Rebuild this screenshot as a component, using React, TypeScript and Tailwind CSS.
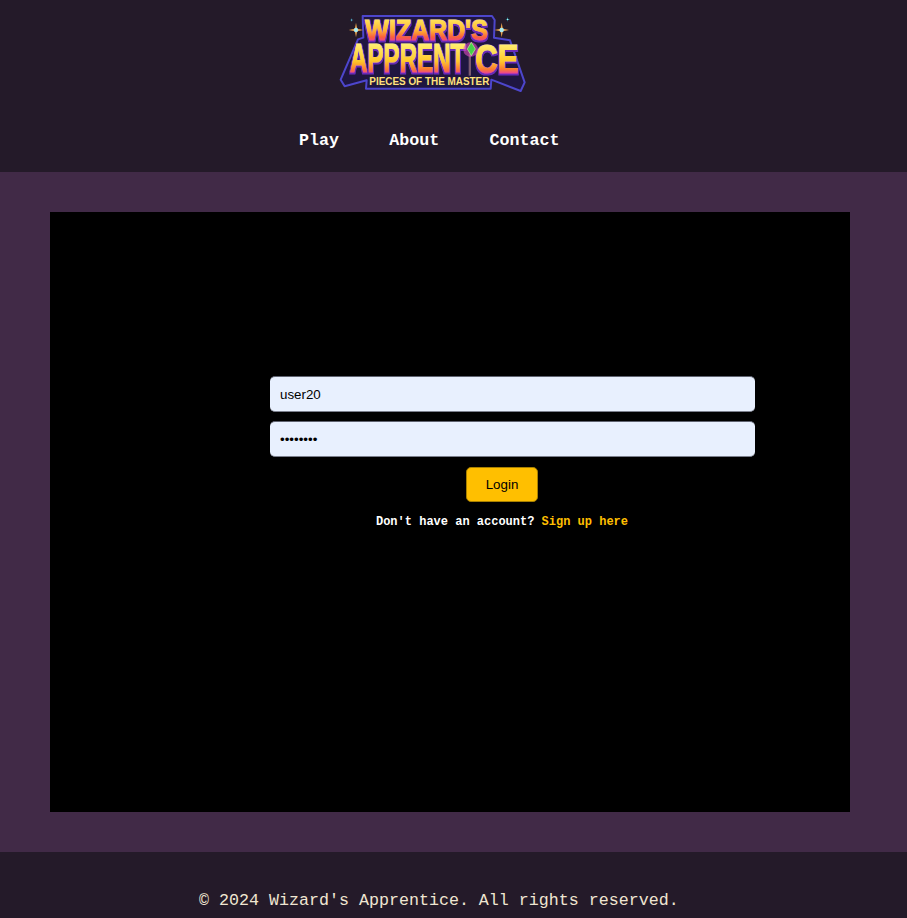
const mono = "font-['Liberation_Mono','DejaVu_Sans_Mono',monospace]";
const field =
  "h-[36px] w-[485px] self-start rounded-[5px] border-b border-t border-b-[#7b7f8c] border-t-[#5f6370] bg-[#e8f0fe] px-[10px] font-['Liberation_Sans',Arial,sans-serif] text-[13.33px] text-black outline-none";

function Sparkle({ x, y, r, color, core }: { x: number; y: number; r: number; color: string; core: string }) {
  const q = r * 0.16;
  return (
    <g>
      <path d={`M${x} ${y - r}L${x + q} ${y - q}L${x + r} ${y}L${x + q} ${y + q}L${x} ${y + r}L${x - q} ${y + q}L${x - r} ${y}L${x - q} ${y - q}Z`} fill={color} />
      <circle cx={x} cy={y} r={r * 0.3} fill={core} />
    </g>
  );
}

function Logo() {
  const sans = "'Liberation Sans', Arial, sans-serif";
  return (
    <svg viewBox="0 0 630 285" className="block h-[95px] w-[210px]" aria-label="Wizard's Apprentice logo">
      <defs>
        <linearGradient id="row1" gradientUnits="userSpaceOnUse" x1="0" y1="42" x2="0" y2="110">
          <stop offset="0" stopColor="#ffe65c" />
          <stop offset="0.5" stopColor="#ffb52e" />
          <stop offset="0.8" stopColor="#f9603a" />
          <stop offset="1" stopColor="#e8409a" />
        </linearGradient>
        <linearGradient id="row2" gradientUnits="userSpaceOnUse" x1="0" y1="112" x2="0" y2="206">
          <stop offset="0" stopColor="#fff27a" />
          <stop offset="0.6" stopColor="#ffc92a" />
          <stop offset="0.86" stopColor="#fb7a30" />
          <stop offset="1" stopColor="#e8409a" />
        </linearGradient>
        <filter id="lift" x="-10%" y="-20%" width="120%" height="150%">
          <feMorphology in="SourceAlpha" operator="dilate" radius="1.5" result="fat" />
          <feOffset in="fat" dy="4" result="low" />
          <feFlood floodColor="#6a2cb8" />
          <feComposite in2="low" operator="in" result="shade" />
          <feMerge>
            <feMergeNode in="shade" />
            <feMergeNode in="SourceGraphic" />
          </feMerge>
        </filter>
      </defs>
      <path
        d="M98 33L486 33L494 45L492 98L540 106L584 232L572 258L484 224L482 251L108 251L110 226L44 244L32 224L84 103L100 98Z"
        fill="#1f1640"
        stroke="#4d46cc"
        strokeWidth="6"
        strokeLinejoin="round"
      />
      <g filter="url(#lift)">
        <text x="106" y="104" fontFamily={sans} fontWeight="700" fontSize="88" textLength="368" lengthAdjust="spacingAndGlyphs" fill="url(#row1)" stroke="url(#row1)" strokeWidth="3">
          WIZARD'S
        </text>
        <text x="60" y="201" fontFamily={sans} fontWeight="700" fontSize="124" textLength="346" lengthAdjust="spacingAndGlyphs" fill="url(#row2)" stroke="url(#row2)" strokeWidth="3">
          APPRENT
        </text>
        <text x="436" y="203" fontFamily={sans} fontWeight="700" fontSize="124" textLength="130" lengthAdjust="spacingAndGlyphs" fill="url(#row2)" stroke="url(#row2)" strokeWidth="3">
          CE
        </text>
      </g>
      <rect x="416" y="148" width="7" height="64" fill="#7a5a70" />
      <circle cx="422" cy="134" r="22" fill="#e04fc0" opacity="0.6" />
      <path d="M424 112L436 132L424 152L412 132Z" fill="#46d04a" stroke="#c8f0a0" strokeWidth="2" />
      <text x="118" y="241" fontFamily={sans} fontWeight="700" fontSize="33" textLength="360" lengthAdjust="spacingAndGlyphs" fill="#ffe27a">
        PIECES OF THE MASTER
      </text>
      <Sparkle x={78} y={75} r={22} color="#e8a04a" core="#a8ecf0" />
      <Sparkle x={515} y={75} r={22} color="#e8a04a" core="#a8ecf0" />
      <Sparkle x={65} y={45} r={6} color="#2f9fc8" core="#8fe0f0" />
      <Sparkle x={533} y={43} r={7} color="#30c8d8" core="#c0ffff" />
    </svg>
  );
}

export default function App() {
  return (
    <div className="flex min-h-[918px] flex-col overflow-hidden bg-[#412a47]">
      <header className="h-[172px] bg-[#241a29]">
        <div className="ml-[330px] pt-[5px]">
          <Logo />
        </div>
        <nav className={`mt-[29px] flex gap-[50.3px] pl-[299px] text-[16.67px] font-bold leading-[24px] text-white ${mono}`}>
          <a>Play</a>
          <a>About</a>
          <a>Contact</a>
        </nav>
      </header>
      <main className="p-[40px_57px_40px_50px]">
        <div className="h-[600px] w-[800px] bg-black pl-[220px] pt-[164px]">
          <form className="flex w-[464px] flex-col items-center">
            <input readOnly value="user20" className={`mb-[9px] ${field}`} />
            <input readOnly type="password" value="password" className={`mb-[10px] ${field}`} />
            <button
              type="button"
              className="h-[35px] w-[72px] rounded-[5px] border border-[#a88000] bg-[#ffbf00] font-['Liberation_Sans',Arial,sans-serif] text-[13.33px] text-black"
            >
              Login
            </button>
            <p className={`mt-[11px] text-[12px] font-bold leading-[18px] whitespace-nowrap text-white ${mono}`}>
              Don't have an account? <a className="text-[#ffbf00]">Sign up here</a>
            </p>
          </form>
        </div>
      </main>
      <footer className={`flex-1 bg-[#241a29] pt-[37px] pl-[199px] text-[16.67px] leading-[24px] whitespace-nowrap text-[#f0e6d2] ${mono}`}>
        © 2024 Wizard's Apprentice. All rights reserved.
      </footer>
    </div>
  );
}
